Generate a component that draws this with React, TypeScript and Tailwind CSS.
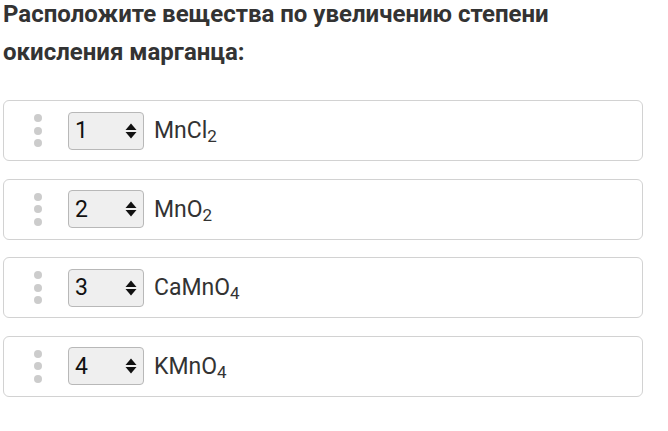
const items = [
  { n: 1, base: 'MnCl', sub: '2' },
  { n: 2, base: 'MnO', sub: '2' },
  { n: 3, base: 'CaMnO', sub: '4' },
  { n: 4, base: 'KMnO', sub: '4' },
]

function Grip() {
  return (
    <div className="flex w-2 flex-col items-center gap-[4.6px]">
      <span className="h-2 w-2 rounded-full bg-[#cccccc]" />
      <span className="h-2 w-2 rounded-full bg-[#cccccc]" />
      <span className="h-2 w-2 rounded-full bg-[#cccccc]" />
    </div>
  )
}

function Arrows() {
  return (
    <svg width="12" height="16" viewBox="0 0 12 16" className="shrink-0">
      <path d="M6 0.5 L11.5 7 L0.5 7 Z" fill="#111" />
      <path d="M0.5 9 L11.5 9 L6 15.5 Z" fill="#111" />
    </svg>
  )
}

export default function App() {
  return (
    <div className="h-[431px] w-[668px] bg-white px-[3px] font-['Roboto',sans-serif] text-[#333]">
      <h1 className="-mt-[5px] text-[24px] font-bold leading-[38px]">
        Расположите вещества по увеличению степени
        <br />
        окисления марганца:
      </h1>

      <div className="mt-[29px] flex w-[640px] flex-col gap-[17.6px]">
        {items.map((it) => (
          <div
            key={it.n}
            className="flex h-[61px] items-center rounded-[6px] border border-[#d2d2d2] bg-white"
          >
            <div className="ml-[30px]">
              <Grip />
            </div>
            <div className="ml-[26px] flex h-[38px] w-[76px] items-center justify-between rounded-[4px] border border-[#b8b8b8] bg-[#efefef] pl-[6px] pr-[6px]">
              <span className="text-[23px] leading-none text-[#111]">{it.n}</span>
              <Arrows />
            </div>
            <span className="ml-[10px] text-[23px] leading-none text-[#333]">
              {it.base}
              <sub className="text-[17px]">{it.sub}</sub>
            </span>
          </div>
        ))}
      </div>
    </div>
  )
}
